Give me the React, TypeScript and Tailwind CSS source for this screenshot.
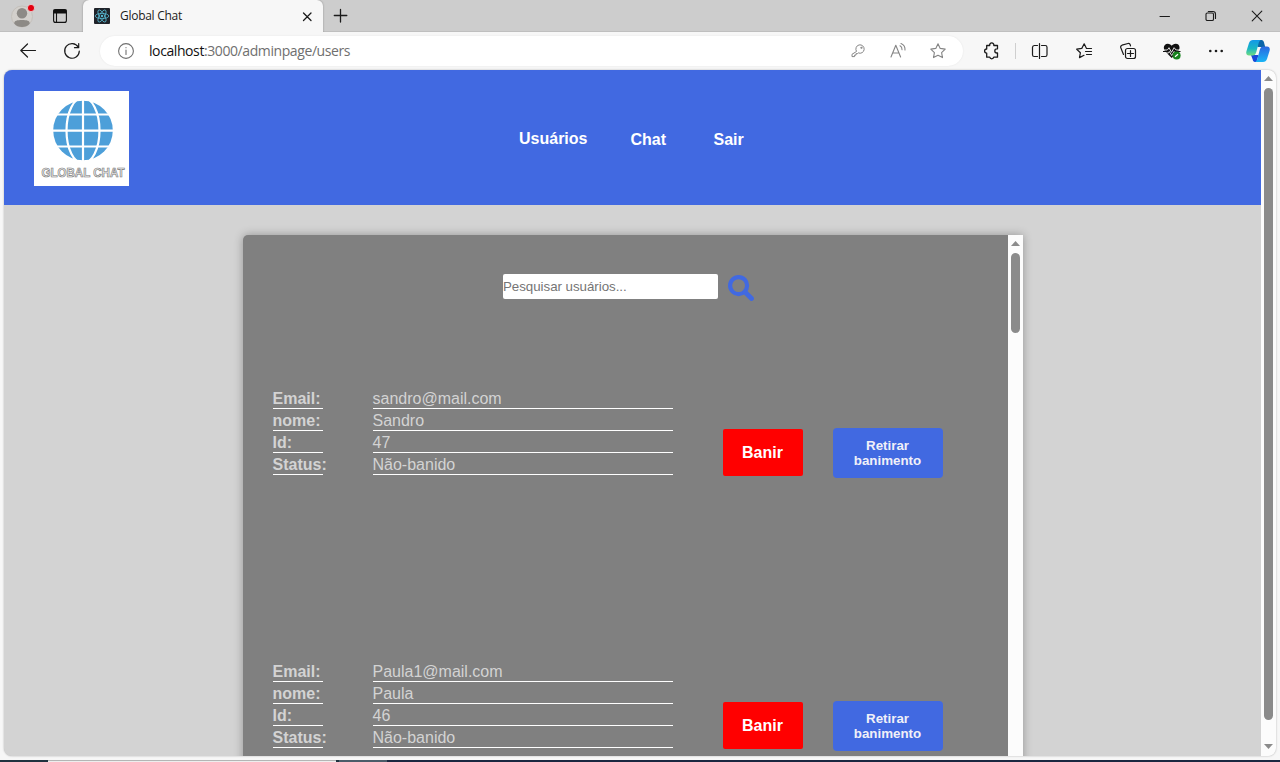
import type { ReactNode } from "react";

type User = { email: string; nome: string; id: string; status: string };

const users: User[] = [
  { email: "sandro@mail.com", nome: "Sandro", id: "47", status: "Não-banido" },
  { email: "Paula1@mail.com", nome: "Paula", id: "46", status: "Não-banido" },
];

function Slot({ children, className = "w-11" }: { children: ReactNode; className?: string }) {
  return <div className={`flex h-full shrink-0 items-center justify-center ${className}`}>{children}</div>;
}

function Svg({ children, size = 16, color = "#1b1b1b", sw = 1.1 }: { children: ReactNode; size?: number; color?: string; sw?: number }) {
  return (
    <svg width={size} height={size} viewBox={`0 0 ${size} ${size}`} fill="none" stroke={color} strokeWidth={sw} strokeLinecap="round" strokeLinejoin="round" className="overflow-visible">
      {children}
    </svg>
  );
}

const STAR = "M8 .8l2.200 4.600 5 .7-3.600 3.500.9 5L8 12.200l-4.500 2.400.9-5L.8 6.100l5-.7z";

function TabStrip() {
  return (
    <div className="flex h-8 shrink-0 bg-[#cdcdcd] shadow-[inset_0_-1px_0_#bfbfbf]">
      <div className="flex w-[83px] shrink-0 items-center pl-[11px]">
        <svg width="24" height="24" viewBox="0 0 24 24">
          <circle cx="11" cy="12.500" r="10.500" fill="#d3d0cc" stroke="#c4c0bb" />
          <circle cx="11" cy="9.300" r="5.200" fill="#8d8a86" />
          <path d="M3.200 19.500c0-3 3-3.500 7.800-3.500s7.800.5 7.800 3.500c-2 2.600-4.800 3.500-7.800 3.500s-5.800-.9-7.800-3.500z" fill="#8d8a86" />
          <circle cx="20" cy="4" r="3.600" fill="#e3000f" stroke="#e9dada" strokeWidth=".8" />
        </svg>
        <svg className="ml-[18px]" width="14" height="14" viewBox="0 0 14 14" fill="none" stroke="#111" strokeWidth="1.1">
          <rect x=".6" y=".6" width="12.800" height="12.800" rx="2" />
          <path d="M1 1h12v3H1z" fill="#111" />
          <path d="M3.500 4v9" />
        </svg>
      </div>
      <div className="flex w-[240px] shrink-0 items-center rounded-t-md bg-[#f7f7f7] pl-[11px] pr-[11px] shadow-[0_0_2px_rgba(0,0,0,0.35)] [clip-path:inset(-2px_-3px_0_-3px)]">
        <svg width="16" height="16" viewBox="0 0 16 16" fill="none" stroke="#58b9d2" strokeWidth=".8">
          <rect width="16" height="16" rx="1" fill="#20232a" stroke="none" />
          <ellipse cx="8" cy="8" rx="6.800" ry="2.600" />
          <ellipse cx="8" cy="8" rx="6.800" ry="2.600" transform="rotate(60 8 8)" />
          <ellipse cx="8" cy="8" rx="6.800" ry="2.600" transform="rotate(120 8 8)" />
          <circle cx="8" cy="8" r="1.200" fill="#58b9d2" stroke="none" />
        </svg>
        <span className="ml-[10px] flex-1 font-['Open_Sans',sans-serif] text-[12px] leading-4 tracking-[-0.28px] text-[#1b1b1b]">Global Chat</span>
        <Svg size={10} sw={1.3}><path d="M1.500 2l7.500 7.500M9 2L1.500 9.500" /></Svg>
      </div>
      <div className="flex flex-1 items-center pl-[11px]">
        <Svg size={14} sw={1.3}><path d="M6.500 .5v12.500M.3 6.500h12.500" /></Svg>
      </div>
      <div className="flex w-[138px] shrink-0">
        <Slot className="w-[46px]"><Svg size={12} sw={1}><path d="M1 6.500h9.500" /></Svg></Slot>
        <Slot className="w-[46px]">
          <Svg size={12} sw={1.1}><rect x="1" y="3" width="7.500" height="7.500" rx="1.300" /><path d="M3.300 1.500h4.500a2.700 2.700 0 0 1 2.700 2.700v4.300" /></Svg>
        </Slot>
        <Slot className="w-[46px]"><Svg size={12} sw={1.1}><path d="M1.200 1.200l9.600 9.600M10.800 1.200l-9.600 9.600" /></Svg></Slot>
      </div>
    </div>
  );
}

function Toolbar() {
  return (
    <div className="flex h-[38px] shrink-0 items-center bg-[#f7f7f7] pl-[6px]">
      <Slot><Svg sw={1.2}><path d="M15.500 7.500H.8M7.500 1L.8 7.500l6.700 6.500" /></Svg></Slot>
      <Slot><Svg sw={1.2}><path d="M14.300 4.200A7.300 7.300 0 1 0 15.300 8M14.700.5v4.200h-4.200" /></Svg></Slot>
      <div className="ml-[6px] flex h-[30px] w-[863px] shrink-0 items-center rounded-full bg-white pl-[18px] pr-[5px] shadow-[0_0_2px_rgba(0,0,0,0.08)]">
        <Svg color="#707070"><circle cx="8" cy="8" r="7.400" /><path d="M8 7v4.500M8 4.500v.2" /></Svg>
        <span className="ml-[15px] flex-1 font-['Open_Sans',sans-serif] text-[14px] leading-5 tracking-[-0.41px] text-[#6f6f6f]">
          <span className="text-[#111]">localhost</span>:3000/adminpage/users
        </span>
        <Slot className="w-10">
          <Svg size={14} color="#858585" sw={1}><path d="M5.300 7.100A4.200 4.200 0 1 1 7.300 8.900L6.300 9.700H5v1.400H3.600v1.500H1v-1.900z" /><circle cx="10.300" cy="3.800" r=".6" /></Svg>
        </Slot>
        <Slot className="w-10">
          <Svg color="#858585"><path d="M1 14L5.800 2.200 10.600 14M2.600 10h6.400M10 2.800a4 4 0 0 1 2 3.800M11 .5a6.500 6.500 0 0 1 4 6.500" /></Svg>
        </Slot>
        <Slot className="w-10"><Svg color="#858585"><path d={STAR} /></Svg></Slot>
      </div>
      <div className="flex h-full items-center pl-[7px]">
        <Slot>
          <Svg sw={1.3}><path d="M2.700 2.500h3a2.100 2.100 0 1 1 4.100 0h3.700v3.300h-.6a2.100 2.100 0 0 0 0 4.200h.6v4.200H9.800a2.100 2.100 0 0 1-4.100 0h-3v-4a2.100 2.100 0 0 1 0-4.200z" /></Svg>
        </Slot>
        <div className="ml-px mr-[2px] h-4 w-px bg-[#cfcfcf]" />
        <Slot>
          <Svg sw={1.2}><path d="M5.500 2.500H2.200A2 2 0 0 0 .5 4.300v7.400c0 1 .7 1.800 1.700 1.800H5.500M9.500 2.500h3.800c1.200 0 1.700.8 1.700 1.800v7.400c0 1-.5 1.800-1.700 1.800H9.500M7.500 .6v14.800" /></Svg>
        </Slot>
        <Slot>
          <Svg sw={1.2}><path d="M10.500 5.400L8.200 .8 5.800 5.400.7 6.200l3.700 3.500-.9 4.900 4.500-2.300M10.500 5.500h5M9.500 8.500h6M10.500 11.500h5" /></Svg>
        </Slot>
        <Slot>
          <Svg sw={1.2}><rect x="5.500" y="5.500" width="10" height="10" rx="2" /><path d="M10.500 7.500v6M7.500 10.500h6M3.500 11.500L.8 4.700a2 2 0 0 1 1.200-2.500L8 .5a1.800 1.800 0 0 1 2.200 1.200l.3 1.100" /></Svg>
        </Slot>
        <Slot>
          <svg width="18" height="18" viewBox="0 0 18 18" fill="none">
            <path d="M8.700 16L1.800 9C-.4 5.500 1.300 1.800 4.700 1.800c2 0 3.300 1 4 2 .8-1 2-2 4-2 3.500 0 5 3.700 2.800 7z" fill="#111" />
            <path d="M.5 8h4l1.500-2.300 2.500 4.600 2.600-4.600 2 2.300h4.500M2.500 11h3l.8-1.500 2.400 4 2.400-4 1 1.500" stroke="#f7f7f7" strokeWidth=".9" />
            <path d="M0 9.500h4.300l1.500-1.800M12.300 8.500l1 1H17.500" stroke="#111" strokeWidth="1.1" />
            <circle cx="13.600" cy="13.600" r="4" fill="#16831c" />
            <path d="M12 14.700l3-2.500" stroke="#fff" strokeWidth="1.2" />
          </svg>
        </Slot>
        <Slot>
          <Svg><g fill="#1b1b1b" stroke="none"><circle cx="2.300" cy="8" r="1.300" /><circle cx="8" cy="8" r="1.300" /><circle cx="13.700" cy="8" r="1.300" /></g></Svg>
        </Slot>
        <Slot className="w-10">
          <svg width="24" height="24" viewBox="0 0 24 24">
            <defs>
              <linearGradient id="copA" x1="0" y1="0" x2="0" y2="1"><stop offset="0" stopColor="#1298e8" /><stop offset=".55" stopColor="#19b6c4" /><stop offset="1" stopColor="#6fdc80" /></linearGradient>
              <linearGradient id="copB" x1="0" y1="0" x2="0" y2="1"><stop offset="0" stopColor="#2a66e0" /><stop offset="1" stopColor="#19b5f5" /></linearGradient>
            </defs>
            <path d="M11 1h4.500c1.500 0 2 1 2.500 2.500L19.200 8H14.500L11.500 8z" fill="#0a64a8" />
            <path d="M5 16h7.500l-2 7H9c-1.500 0-2-1-2.300-2.500z" fill="#1748d8" />
            <path d="M7 1h8c-1.500.5-2 2-2.600 4L10.300 13c-.7 2.500-1.700 3.500-3.800 3.500H3c-2.500 0-3.300-2-2.500-4.500L3 4c.7-2 2-3 4-3z" fill="url(#copA)" />
            <path d="M17 23H9c1.500-.5 2-2 2.600-4L13.700 11c.7-2.500 1.700-3.500 3.800-3.500H21c2.500 0 3.300 2 2.500 4.500L21 20c-.7 2-2 3-4 3z" fill="url(#copB)" />
          </svg>
        </Slot>
      </div>
    </div>
  );
}

function Logo() {
  return (
    <svg width="95" height="95" viewBox="0 0 95 95" className="shrink-0 overflow-visible">
      <rect width="95" height="95" fill="#fff" />
      <circle cx="49" cy="39.500" r="29.800" fill="#4d9fd9" />
      <g fill="none" stroke="#fff" strokeWidth="2.200">
        <path d="M49 8v63M18 23.500h62M18 39.700h62M18 55.500h62" />
        <ellipse cx="49" cy="39.500" rx="16.500" ry="33" />
      </g>
      <text x="7.500" y="86" fontFamily="Liberation Sans, Arial, sans-serif" fontSize="12.500" fontWeight="bold" textLength="83" lengthAdjust="spacingAndGlyphs" fill="#eeeeee" stroke="#777" strokeWidth=".65">GLOBAL CHAT</text>
    </svg>
  );
}

function Header() {
  return (
    <header className="flex h-[135px] shrink-0 items-start bg-[#4169e1] pl-[30px] pt-[21px]">
      <Logo />
      <nav className="ml-[390px] mt-[39px] flex items-start text-[16px] font-bold leading-[18px] text-white">
        <a className="w-[111.500px]">Usuários</a>
        <a className="w-[83px] pt-px">Chat</a>
        <a className="pt-px">Sair</a>
      </nav>
    </header>
  );
}

function Arrow({ down = false }: { down?: boolean }) {
  return (
    <svg width="9" height="5" viewBox="0 0 9 5" className="shrink-0">
      <path d={down ? "M0 0h9L4.500 5z" : "M0 5h9L4.500 0z"} fill="#8b8b8b" />
    </svg>
  );
}

function UserRow({ user }: { user: User }) {
  const fields = [["Email:", user.email], ["nome:", user.nome], ["Id:", user.id], ["Status:", user.status]];
  return (
    <div className="flex h-[273px] shrink-0 pl-[30px] text-[16px] leading-[18px] text-[#d3d3d3]">
      <dl className="w-[400px]">
        {fields.map(([label, value]) => (
          <div key={label} className="flex h-[22px]">
            <dt className="h-[22px] w-[50px] border-b border-white pt-[3px] -indent-[0.5px] font-bold">{label}</dt>
            <dd className="ml-[50px] h-[22px] w-[300px] border-b border-white pt-[3px] -indent-[0.5px]">{value}</dd>
          </div>
        ))}
      </dl>
      <button className="ml-[50px] mt-[42px] h-[47px] w-20 rounded-[2px] bg-[#ff0000] pr-px text-[16px] font-bold text-white">Banir</button>
      <button className="ml-[30px] mt-[41px] h-[50px] w-[110px] rounded-[4px] bg-[#4169e1] pl-4 pr-[17px] text-[13.333px] font-bold leading-[15px] text-[#f0f0f8]">Retirar banimento</button>
    </div>
  );
}

function UsersPanel() {
  return (
    <section className="ml-[239px] mt-[30px] flex h-[600px] w-[780px] shrink-0 overflow-hidden rounded-[5px] rounded-tr-none bg-[#808080] shadow-[0_0_10px_rgba(0,0,0,0.3)]">
      <div className="flex flex-1 flex-col overflow-hidden">
        <div className="flex h-[152px] shrink-0 items-start pl-[260px] pt-[39px]">
          <input className="h-[25px] w-[215px] rounded-[2px] bg-white p-0 text-[13.333px] tracking-[-0.04px] placeholder:text-[#757575]" placeholder="Pesquisar usuários..." />
          <svg className="ml-[10px] mt-px" width="26" height="26" viewBox="0 0 26 26" fill="none" stroke="#4169e1">
            <circle cx="10.600" cy="10.600" r="8.500" strokeWidth="4.200" />
            <path d="M17 17l6.500 6.500" strokeWidth="4.800" strokeLinecap="round" />
          </svg>
        </div>
        {users.map((u) => <UserRow key={u.id} user={u} />)}
      </div>
      <div className="flex w-[15px] shrink-0 flex-col items-center bg-[#fcfcfc] pt-[6px]">
        <Arrow />
        <div className="mt-[7px] h-20 w-[9px] rounded-full bg-[#8b8b8b]" />
      </div>
    </section>
  );
}

export default function App() {
  return (
    <div className="flex h-[762px] w-[1280px] flex-col overflow-hidden bg-[#f7f7f7] font-['Liberation_Sans',Arial,sans-serif]">
      <TabStrip />
      <Toolbar />
      <div className="mx-1 flex h-[686px] shrink-0 overflow-hidden rounded-lg bg-[#d3d3d3] shadow-[0_0_2px_rgba(0,0,0,0.3)]">
        <main className="flex h-full w-[1257px] shrink-0 flex-col overflow-hidden">
          <Header />
          <UsersPanel />
        </main>
        <div className="flex w-[15px] shrink-0 flex-col items-center bg-[#fcfcfc] py-[6px]">
          <Arrow />
          <div className="mt-[7px] h-[632px] w-[9px] rounded-full bg-[#8b8b8b]" />
          <div className="flex flex-1 items-end pb-[1px]"><Arrow down /></div>
        </div>
      </div>
      <div className="mt-1 flex h-[2px] shrink-0 bg-[#1b2740]">
        <div className="w-12 bg-[#20323f]" />
        <div className="w-[288px] border-t border-[#b5b5b5] bg-[#eeeeee]" />
        <div className="w-[3px] bg-[#20323f]" />
        <div className="w-12 bg-[#4b5c69]" />
      </div>
    </div>
  );
}
